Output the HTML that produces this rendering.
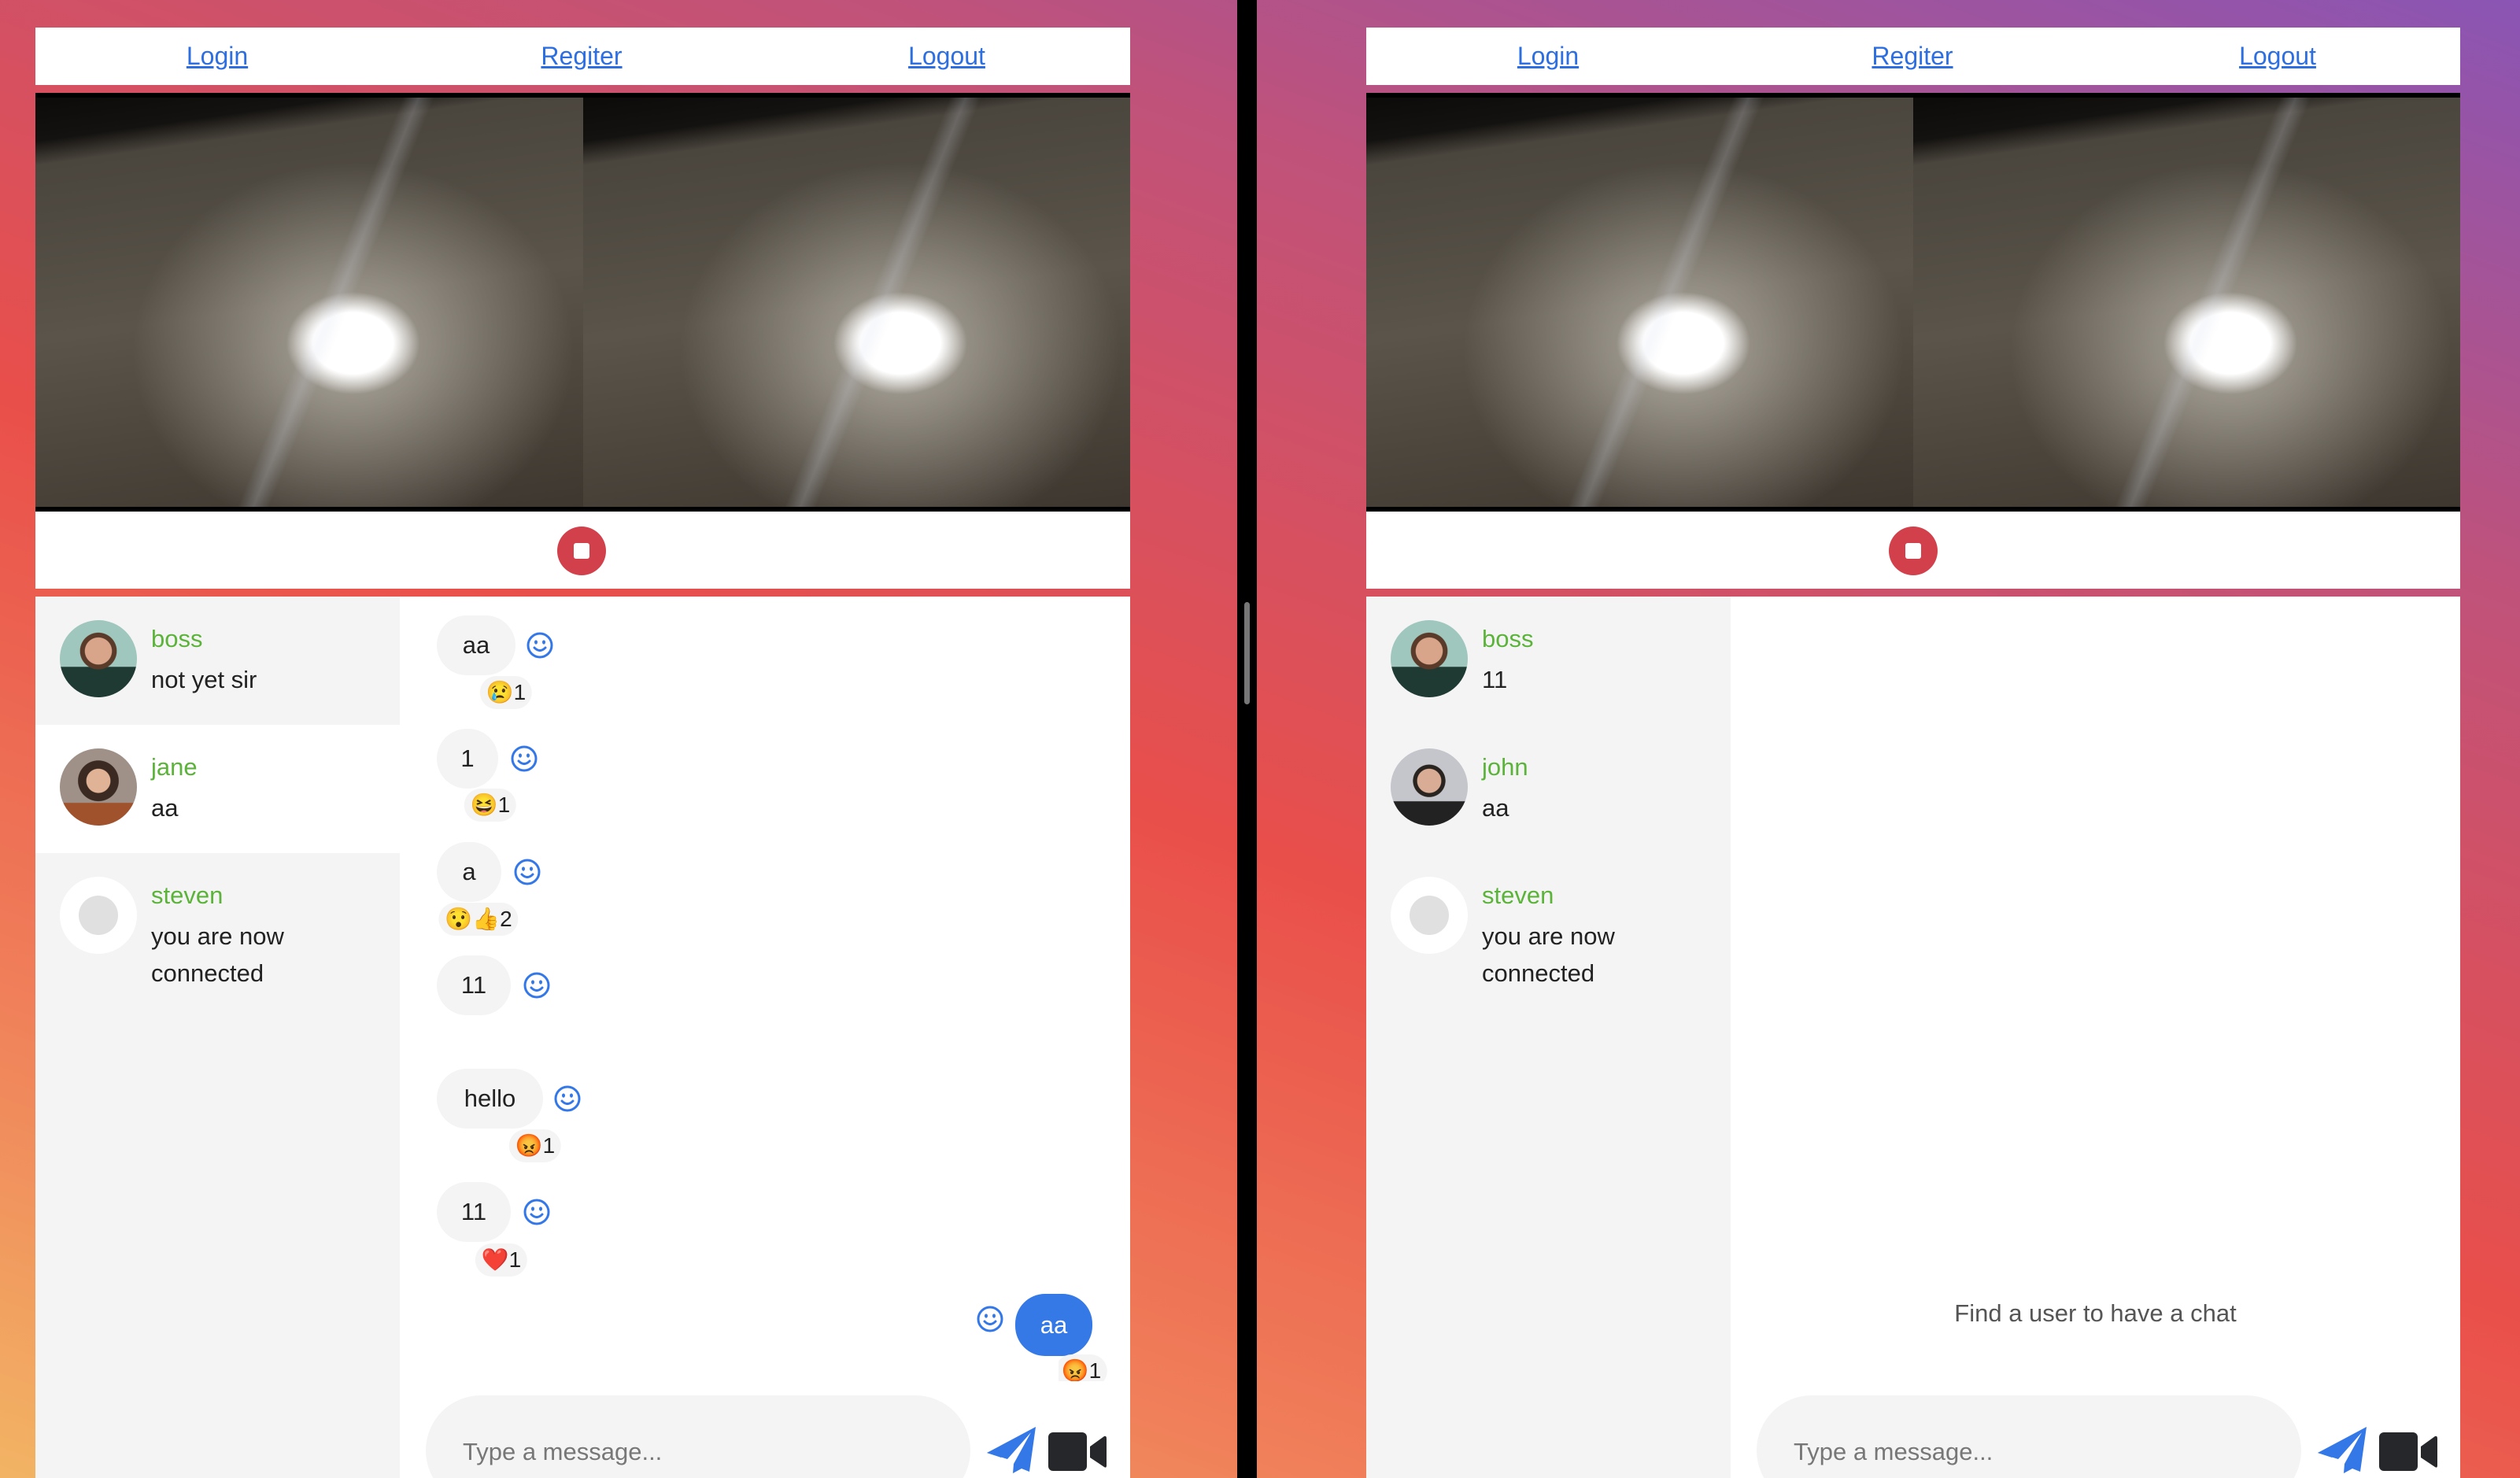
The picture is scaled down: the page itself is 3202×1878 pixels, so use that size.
<!DOCTYPE html>
<html><head><meta charset="utf-8"><style>
*{margin:0;padding:0;box-sizing:border-box}
body{width:3202px;height:1878px;overflow:hidden;position:relative;font-family:"Liberation Sans",sans-serif;
background:linear-gradient(200deg,#8a55b4 0%,#c0527a 25%,#e94f4a 55%,#f0805a 80%,#f2b464 100%);}
.a{position:absolute}
.nav{background:#fff;height:73px;top:35px;display:flex;align-items:center}
.nav a{position:absolute;color:#2d6fe0;text-decoration:underline;font-size:32px;transform:translateX(-50%);top:18px}
.vid{top:118px;height:532px;background:#000}
.cam{position:absolute;top:6px;height:520px;width:50%;overflow:hidden;
background:radial-gradient(ellipse 85px 65px at 58% 60%,#fff 0%,#fff 60%,rgba(255,255,255,0) 100%),
radial-gradient(ellipse 280px 240px at 58% 62%,rgba(200,195,185,.8),rgba(120,112,100,0) 100%),
linear-gradient(172deg,#0c0b0a 0%,#141210 9%,#4a453d 14%,#5a544a 50%,#3d372f 100%)}
.cam:before{content:"";position:absolute;left:52%;top:0;width:40px;height:520px;background:linear-gradient(90deg,rgba(220,220,230,0),rgba(215,220,235,.22),rgba(220,220,230,0));transform:skewX(-22deg)}
.ctl{top:650px;height:98px;background:#fff}
.stop{position:absolute;top:19px;width:62px;height:62px;border-radius:50%;background:#d1404b;transform:translateX(-50%)}
.stop:after{content:"";position:absolute;left:21px;top:21px;width:20px;height:20px;background:#fff;border-radius:3px}
.chat{top:758px;height:1120px;background:#fff;overflow:hidden}
.side{position:absolute;left:0;top:0;width:463px;height:1120px;background:#f4f4f4}
.row{position:absolute;left:0;width:463px;height:163px}
.av{position:absolute;left:31px;top:30px;width:98px;height:98px;border-radius:50%}
.nm{position:absolute;left:147px;top:36px;color:#5bb33a;font-size:31px}
.ms{position:absolute;left:147px;top:82px;color:#222;font-size:31px;line-height:47px;width:300px}
.b{position:absolute;left:510px;height:76px;border-radius:38px;background:#f4f4f4;color:#222;font-size:31px;line-height:76px;text-align:center}
.sm{position:absolute;width:34px;height:34px}
.r{position:absolute;height:42px;border-radius:21px;background:#f4f4f4;font-size:28px;line-height:42px;padding:0 8px;transform:translate(-50%,-50%);color:#222;white-space:nowrap}
.inp{position:absolute;left:496px;top:1015px;width:692px;height:140px;border-radius:70px;background:#f4f4f4;color:#777;font-size:31px;padding:54px 0 0 47px}
</style></head><body>

<svg width="0" height="0" style="position:absolute"><defs><g id="s"><circle cx="17" cy="17" r="15" fill="none" stroke="#3478e8" stroke-width="3"/><ellipse cx="12" cy="13" rx="2" ry="2.6" fill="#3478e8"/><ellipse cx="22" cy="13" rx="2" ry="2.6" fill="#3478e8"/><path d="M10 20 Q17 27 24 20" fill="none" stroke="#3478e8" stroke-width="3" stroke-linecap="round"/></g></defs></svg>

<div class="a" style="left:1572px;top:0;width:25px;height:1878px;background:#000"></div>
<div class="a" style="left:1581px;top:765px;width:7px;height:130px;border-radius:4px;background:#777"></div>

<!-- LEFT PANEL -->
<div class="a nav" style="left:45px;width:1391px"><a style="left:231px">Login</a><a style="left:694px">Regiter</a><a style="left:1158px">Logout</a></div>
<div class="a vid" style="left:45px;width:1391px"><div class="cam" style="left:0"></div><div class="cam" style="left:50%"></div></div>
<div class="a ctl" style="left:45px;width:1391px"><div class="stop" style="left:694px"></div></div>
<div class="a chat" style="left:45px;width:1391px">
 <div class="side"></div>
 <div class="row" style="top:0;background:#f4f4f4"><div class="av" style="background:radial-gradient(circle at 50% 40%,#d8a58a 0 22%,#5a3b2a 23% 30%,transparent 31%),linear-gradient(#9fc7bd,#9fc7bd 60%,#1f3a33 61%)"></div><div class="nm">boss</div><div class="ms">not yet sir</div></div>
 <div class="row" style="top:163px;background:#fff"><div class="av" style="background:radial-gradient(circle at 50% 42%,#e0b296 0 20%,#3a2a22 21% 34%,transparent 35%),linear-gradient(#a09188,#a09188 70%,#a0522d 71%)"></div><div class="nm">jane</div><div class="ms">aa</div></div>
 <div class="row" style="top:326px;background:#f4f4f4"><div class="av" style="background:#fff"><div style="position:absolute;left:24px;top:24px;width:50px;height:50px;border-radius:50%;background:#e0e0e0"></div></div><div class="nm">steven</div><div class="ms">you are now connected</div></div>

 <div class="b" style="top:24px;width:100px">aa</div><svg class="sm" style="left:624px;top:45px"><use href="#s"/></svg><div class="r" style="left:598px;top:122px">😢1</div>
 <div class="b" style="top:168px;width:78px">1</div><svg class="sm" style="left:604px;top:189px"><use href="#s"/></svg><div class="r" style="left:578px;top:265px">😆1</div>
 <div class="b" style="top:312px;width:82px">a</div><svg class="sm" style="left:608px;top:333px"><use href="#s"/></svg><div class="r" style="left:563px;top:410px">😯👍2</div>
 <div class="b" style="top:456px;width:94px">11</div><svg class="sm" style="left:620px;top:477px"><use href="#s"/></svg>
 <div class="b" style="top:600px;width:135px">hello</div><svg class="sm" style="left:659px;top:621px"><use href="#s"/></svg><div class="r" style="left:635px;top:698px">😡1</div>
 <div class="b" style="top:744px;width:94px">11</div><svg class="sm" style="left:620px;top:765px"><use href="#s"/></svg><div class="r" style="left:592px;top:843px">❤️1</div>
 <svg class="sm" style="left:1196px;top:901px"><use href="#s"/></svg>
 <div class="b" style="left:1245px;top:886px;width:98px;height:79px;background:#3579e6;color:#fff;line-height:79px">aa</div>
 <div style="position:absolute;left:1300px;top:963px;width:80px;height:34px;overflow:hidden"><div class="r" style="left:29px;top:21px">😡1</div></div>
 <div class="inp">Type a message...</div>
 <svg class="a" style="left:1207px;top:1054px" width="66" height="60" viewBox="0 0 66 60"><path d="M2 34 L64 1 L56 58 L46 54 L35 60 L36 48 L58 8 L28 42 Z" fill="#3478e8"/><path d="M2 34 L20 40 L58 8 Z" fill="#3478e8"/></svg>
 <svg class="a" style="left:1287px;top:1062px" width="74" height="50" viewBox="0 0 74 50"><rect x="0" y="0" width="49" height="49" rx="6" fill="#25272b"/><path d="M53 18 L71 5 Q74 4 74 8 L74 42 Q74 46 71 44 L53 32 Z" fill="#25272b"/></svg>
</div>

<!-- RIGHT PANEL -->
<div class="a nav" style="left:1736px;width:1390px"><a style="left:231px">Login</a><a style="left:694px">Regiter</a><a style="left:1158px">Logout</a></div>
<div class="a vid" style="left:1736px;width:1390px"><div class="cam" style="left:0"></div><div class="cam" style="left:50%"></div></div>
<div class="a ctl" style="left:1736px;width:1390px"><div class="stop" style="left:695px"></div></div>
<div class="a chat" style="left:1736px;width:1390px">
 <div class="side"></div>
 <div class="row" style="top:0"><div class="av" style="background:radial-gradient(circle at 50% 40%,#d8a58a 0 22%,#5a3b2a 23% 30%,transparent 31%),linear-gradient(#9fc7bd,#9fc7bd 60%,#1f3a33 61%)"></div><div class="nm">boss</div><div class="ms">11</div></div>
 <div class="row" style="top:163px"><div class="av" style="background:radial-gradient(circle at 50% 42%,#d9ad95 0 20%,#2a2420 21% 27%,transparent 28%),linear-gradient(#c4c6cc,#c4c6cc 68%,#222 69%)"></div><div class="nm">john</div><div class="ms">aa</div></div>
 <div class="row" style="top:326px"><div class="av" style="background:#fff"><div style="position:absolute;left:24px;top:24px;width:50px;height:50px;border-radius:50%;background:#e0e0e0"></div></div><div class="nm">steven</div><div class="ms">you are now connected</div></div>
 <div class="a" style="left:463px;width:927px;top:893px;text-align:center;color:#555;font-size:31px">Find a user to have a chat</div>
 <div class="inp">Type a message...</div>
 <svg class="a" style="left:1207px;top:1054px" width="66" height="60" viewBox="0 0 66 60"><path d="M2 34 L64 1 L56 58 L46 54 L35 60 L36 48 L58 8 L28 42 Z" fill="#3478e8"/><path d="M2 34 L20 40 L58 8 Z" fill="#3478e8"/></svg>
 <svg class="a" style="left:1287px;top:1062px" width="74" height="50" viewBox="0 0 74 50"><rect x="0" y="0" width="49" height="49" rx="6" fill="#25272b"/><path d="M53 18 L71 5 Q74 4 74 8 L74 42 Q74 46 71 44 L53 32 Z" fill="#25272b"/></svg>
</div>
</body></html>
